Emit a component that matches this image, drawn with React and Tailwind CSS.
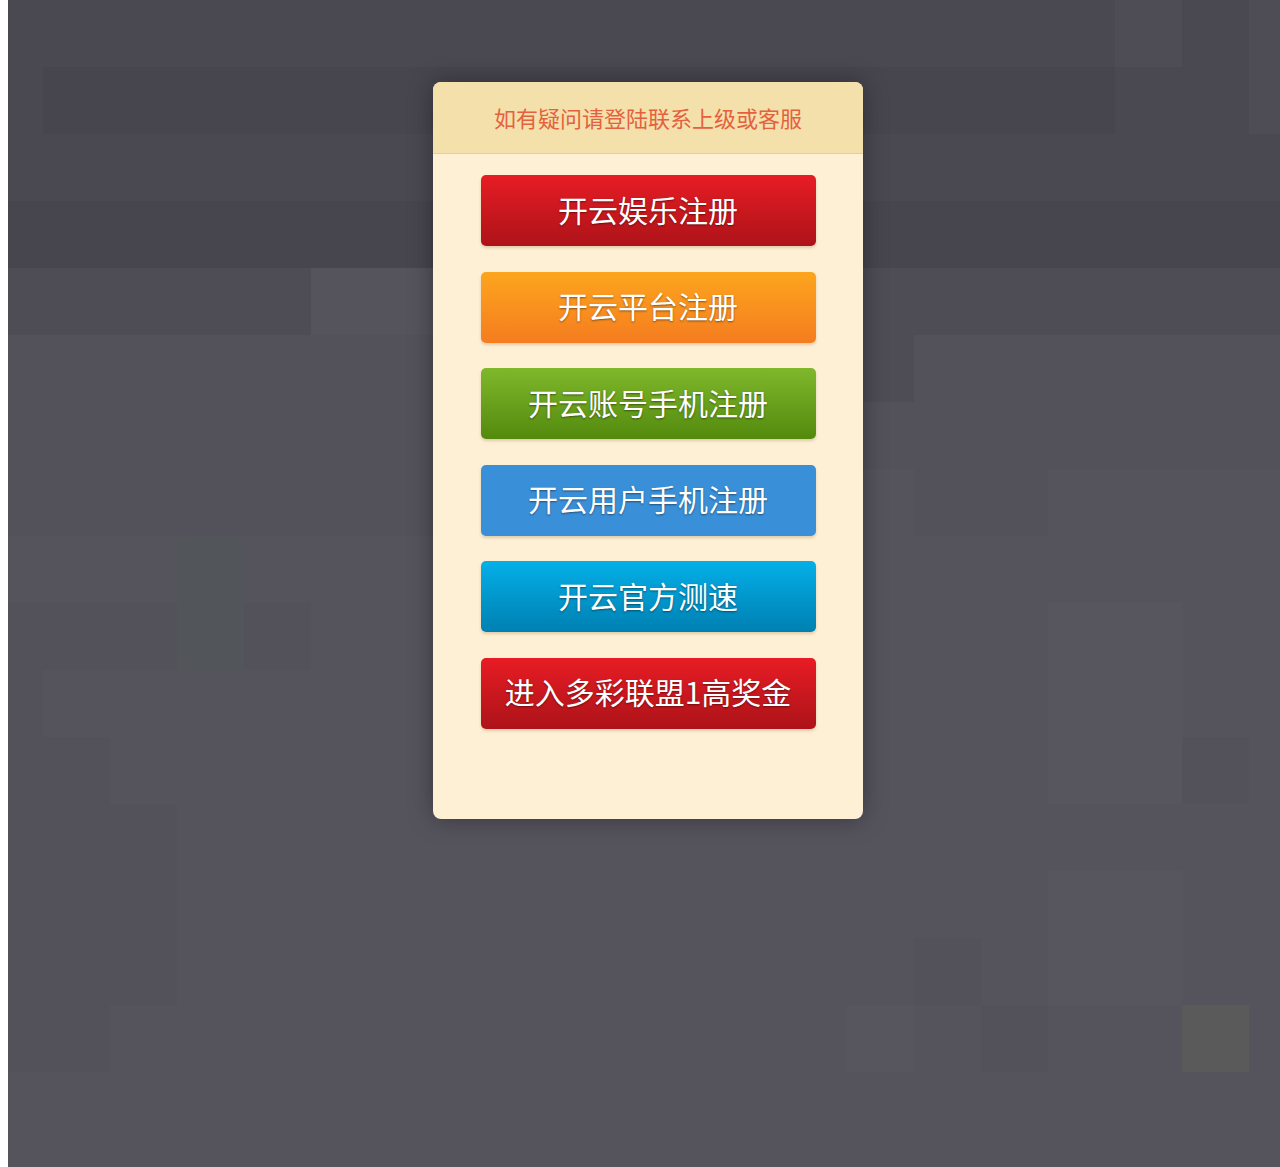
import React from "react";

const PAL = {
  A: "bg-[#4a4851]",
  B: "bg-[#47454e]",
  C: "bg-[#4e4c55]",
  D: "bg-[#53515a]",
  E: "bg-[#55535c]",
  F: "bg-[#57555e]",
  G: "bg-[#52565b]",
  H: "bg-[#5a5a5a]",
  I: "bg-[#4e4c55]",
};

const MAP = [
  "AAAAAAAAAAAAAAAAAIAI",
  "ABBBBBBBBBBBBBBBBAAI",
  "AAAAAAAAAAAAAAAAAAAA",
  "BBBBBBBBBBBBBBBBBBBB",
  "CCCCCEECCCCCCCCCCCCC",
  "DDDDDDDDDDDDDCDDDDDD",
  "DDDDDDDDDDDDDDDDDDDD",
  "DDDDDDDDDDDDDEDDEEEE",
  "EEEGEEEEEEEEEEEEEEEE",
  "DDDGDEEEEEEEEEEEFFEE",
  "DEEEEEEEEEEEEEEEFFEE",
  "DDEEEEEEEEEEEEEEFFDE",
  "DDDEEEEEEEEEEEEEEEEE",
  "DDDEEEEEEEEEEEEEFFEE",
  "DDDEEEEEEEEEEEDEFFEE",
  "DDEEEEEEEEEEEFEDEEHE",
  "EEEEEEEEEEEEEEEEEEEE",
  "EEEEEEEEEEEEEEEEEEEE",
];

const BUTTONS = [
  { label: "开云娱乐注册", cls: "bg-gradient-to-b from-[#e81c24] to-[#ad1319]" },
  { label: "开云平台注册", cls: "bg-gradient-to-b from-[#fca51e] to-[#f57c1f]" },
  { label: "开云账号手机注册", cls: "bg-gradient-to-b from-[#7fb82b] to-[#538a0c]" },
  { label: "开云用户手机注册", cls: "bg-[#3a90d8]" },
  { label: "开云官方测速", cls: "bg-gradient-to-b from-[#04b0e8] to-[#0080b2]" },
  { label: "进入多彩联盟1高奖金", cls: "bg-gradient-to-b from-[#e81c24] to-[#ad1319]" },
];

export default function App() {
  return (
    <div className="w-[1280px] h-[1167px] bg-white pl-[8px] overflow-hidden font-['Noto_Sans_CJK_SC','Noto_Sans',sans-serif]">
      <div className="relative w-[1272px] h-[1167px] overflow-hidden">
        <div className="grid grid-cols-[35px_repeat(18,67px)_31px] auto-rows-[67px]">
          {MAP.flatMap((row, r) =>
            row.split("").map((ch, c) => <div key={r + "-" + c} className={PAL[ch]} />)
          )}
        </div>

        <div className="absolute left-[425px] top-[82px] w-[430px] h-[737px] rounded-[8px] bg-[#fdf0d5] shadow-[0_0_24px_rgba(0,0,0,0.35)] overflow-hidden flex flex-col">
          <div className="h-[72px] shrink-0 bg-[#f4e0aa] border-b border-[#e6cf8f] flex items-center justify-center">
            <span className="text-[22px] leading-none text-[#e4613f] -mt-[2px]">如有疑问请登陆联系上级或客服</span>
          </div>
          <div className="flex flex-col items-center gap-[25.5px] pt-[21px]">
            {BUTTONS.map((b) => (
              <div
                key={b.label}
                className={
                  "w-[335px] h-[71px] rounded-[5px] flex items-center justify-center pb-[4px] text-white text-[30px] leading-none shadow-[0_2px_3px_rgba(120,60,0,0.2)] [text-shadow:0_1px_2px_rgba(0,0,0,0.45)] " +
                  b.cls
                }
              >
                {b.label}
              </div>
            ))}
          </div>
        </div>
      </div>
    </div>
  );
}
